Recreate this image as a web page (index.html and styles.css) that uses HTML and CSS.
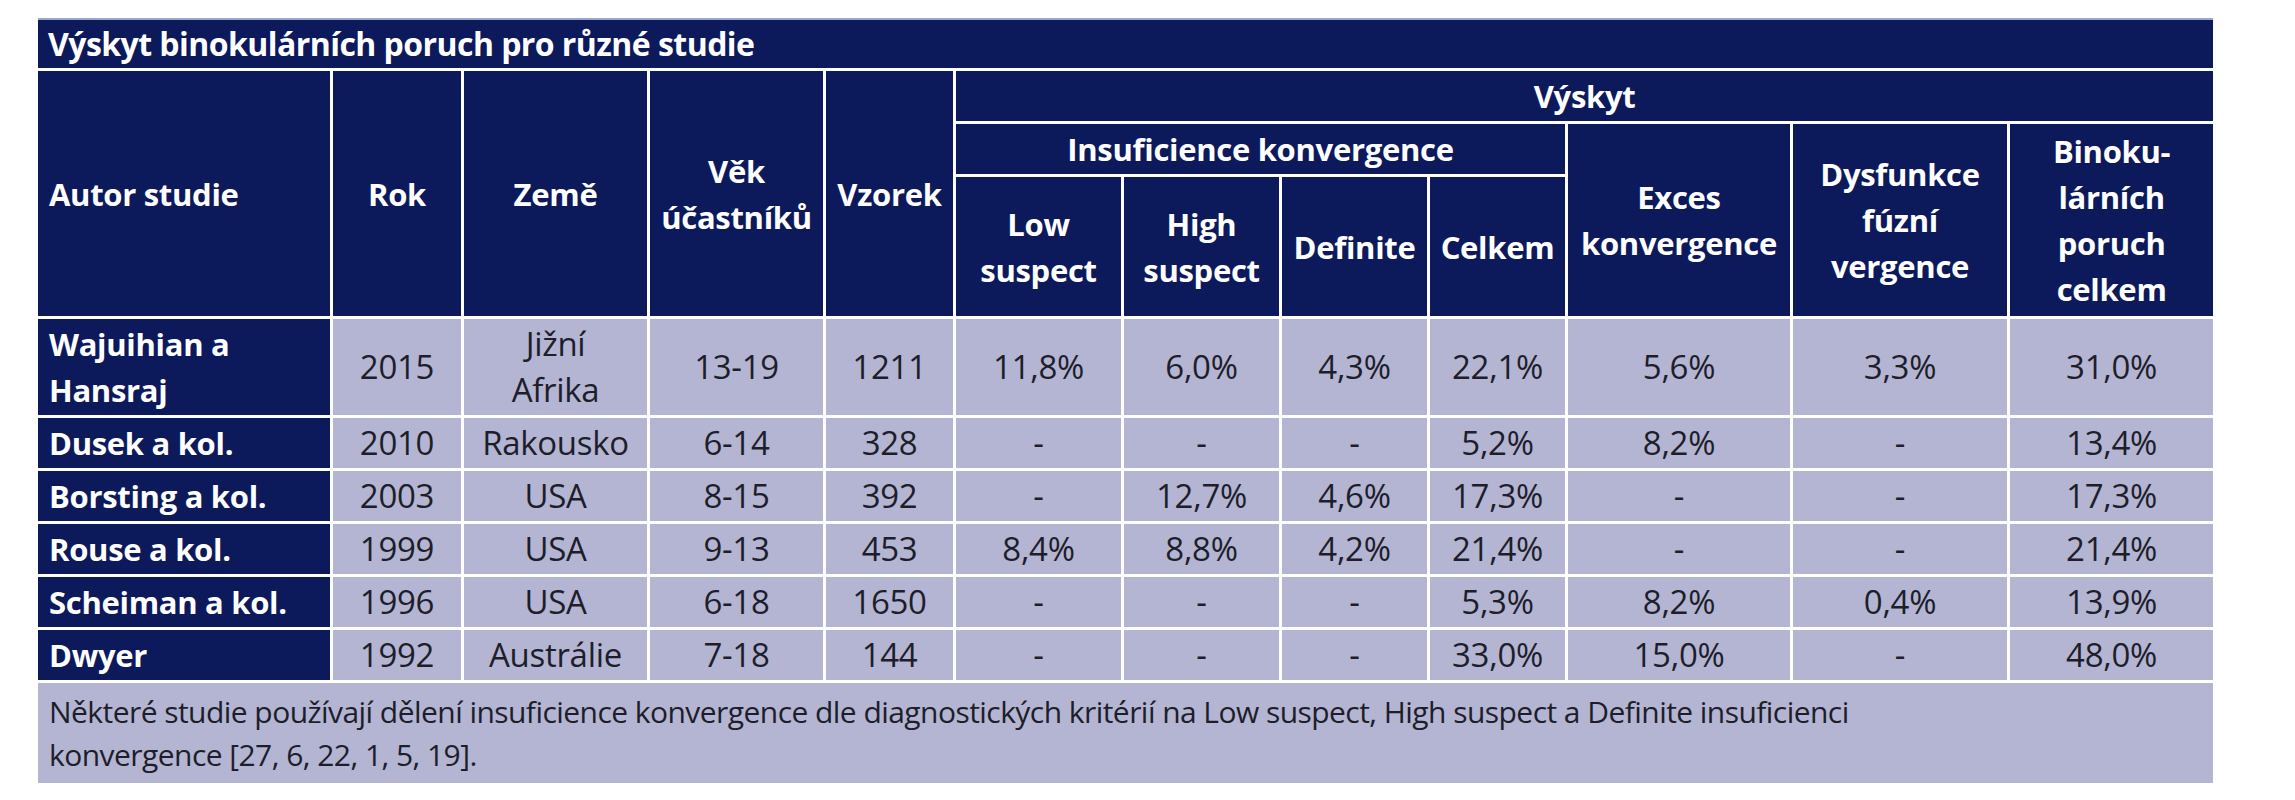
FILE: index.html
```html
<!DOCTYPE html>
<html lang="cs">
<head>
<meta charset="utf-8">
<title>Výskyt binokulárních poruch pro různé studie</title>
<link rel="stylesheet" href="styles.css">
</head>
<body>
<div class="wrap">
<table class="study">
  <colgroup>
    <col class="c-autor"><col class="c-rok"><col class="c-zeme"><col class="c-vek"><col class="c-vzorek">
    <col class="c-low"><col class="c-high"><col class="c-def"><col class="c-celk">
    <col class="c-exces"><col class="c-dys"><col class="c-bino">
  </colgroup>
  <thead>
    <tr class="r-title">
      <th colspan="12" class="title">Výskyt binokulárních poruch pro různé studie</th>
    </tr>
    <tr class="r-h1">
      <th rowspan="3" class="left">Autor studie</th>
      <th rowspan="3">Rok</th>
      <th rowspan="3">Země</th>
      <th rowspan="3">Věk<br>účastníků</th>
      <th rowspan="3">Vzorek</th>
      <th colspan="7">Výskyt</th>
    </tr>
    <tr class="r-h2">
      <th colspan="4">Insuficience konvergence</th>
      <th rowspan="2">Exces<br>konvergence</th>
      <th rowspan="2">Dysfunkce<br>fúzní<br>vergence</th>
      <th rowspan="2">Binoku-<br>lárních<br>poruch<br>celkem</th>
    </tr>
    <tr class="r-h3">
      <th>Low<br>suspect</th>
      <th>High<br>suspect</th>
      <th>Definite</th>
      <th>Celkem</th>
    </tr>
  </thead>
  <tbody>
    <tr class="r-tall">
      <th class="left">Wajuihian a<br>Hansraj</th>
      <td>2015</td><td>Jižní<br>Afrika</td><td>13-19</td><td>1211</td>
      <td>11,8%</td><td>6,0%</td><td>4,3%</td><td>22,1%</td><td>5,6%</td><td>3,3%</td><td>31,0%</td>
    </tr>
    <tr class="r-data">
      <th class="left">Dusek a kol.</th>
      <td>2010</td><td>Rakousko</td><td>6-14</td><td>328</td>
      <td>-</td><td>-</td><td>-</td><td>5,2%</td><td>8,2%</td><td>-</td><td>13,4%</td>
    </tr>
    <tr class="r-data">
      <th class="left">Borsting a kol.</th>
      <td>2003</td><td>USA</td><td>8-15</td><td>392</td>
      <td>-</td><td>12,7%</td><td>4,6%</td><td>17,3%</td><td>-</td><td>-</td><td>17,3%</td>
    </tr>
    <tr class="r-data">
      <th class="left">Rouse a kol.</th>
      <td>1999</td><td>USA</td><td>9-13</td><td>453</td>
      <td>8,4%</td><td>8,8%</td><td>4,2%</td><td>21,4%</td><td>-</td><td>-</td><td>21,4%</td>
    </tr>
    <tr class="r-data">
      <th class="left">Scheiman a kol.</th>
      <td>1996</td><td>USA</td><td>6-18</td><td>1650</td>
      <td>-</td><td>-</td><td>-</td><td>5,3%</td><td>8,2%</td><td>0,4%</td><td>13,9%</td>
    </tr>
    <tr class="r-data">
      <th class="left">Dwyer</th>
      <td>1992</td><td>Austrálie</td><td>7-18</td><td>144</td>
      <td>-</td><td>-</td><td>-</td><td>33,0%</td><td>15,0%</td><td>-</td><td>48,0%</td>
    </tr>
  </tbody>
  <tfoot>
    <tr class="r-note">
      <td colspan="12" class="note">Některé studie používají dělení insuficience konvergence dle diagnostických kritérií na Low suspect, High suspect a Definite insuficienci<br>konvergence [27, 6, 22, 1, 5, 19].</td>
    </tr>
  </tfoot>
</table>
</div>
</body>
</html>
```

FILE: styles.css
```css
html, body {
  margin: 0;
  padding: 0;
  background: #ffffff;
}

body {
  font-family: "Open Sans", "Liberation Sans", "DejaVu Sans", sans-serif;
}

.wrap {
  padding: 15px 0 0 35px;
}

.study {
  border-collapse: separate;
  border-spacing: 3px;
  table-layout: fixed;
  width: 2181px;
}

.c-autor { width: 292px; }
.c-rok { width: 128px; }
.c-zeme { width: 183px; }
.c-vek { width: 173px; }
.c-vzorek { width: 127px; }
.c-low { width: 165px; }
.c-high { width: 155px; }
.c-def { width: 145px; }
.c-celk { width: 135px; }
.c-exces { width: 222px; }
.c-dys { width: 214px; }
.c-bino { width: 203px; }

.study th,
.study td {
  padding: 0;
  vertical-align: middle;
  text-align: center;
  white-space: nowrap;
  overflow: hidden;
}

.study th {
  background: #0c1a5b;
  color: #ffffff;
  font-weight: 700;
  font-size: 31px;
  line-height: 46px;
  letter-spacing: -0.3px;
}

.study td {
  background: #b3b5d3;
  color: #1e1e2a;
  font-weight: 400;
  font-size: 33px;
  line-height: 46px;
  letter-spacing: -0.3px;
}

.study th.left {
  text-align: left;
  padding-left: 11px;
}

.study th.title {
  text-align: left;
  padding-left: 10px;
  font-size: 32px;
  line-height: 46px;
  letter-spacing: -0.55px;
  border-top: 2px solid #9aa7cc;
}

.r-title { height: 50px; }
.r-h1 { height: 50px; }
.r-h2 { height: 50px; }
.r-h3 { height: 139px; }
.r-tall { height: 96px; }
.r-data { height: 50px; }
.r-note { height: 100px; }

.study td.note {
  text-align: left;
  padding-left: 11px;
  font-size: 30px;
  line-height: 43px;
  letter-spacing: -0.55px;
}
```
